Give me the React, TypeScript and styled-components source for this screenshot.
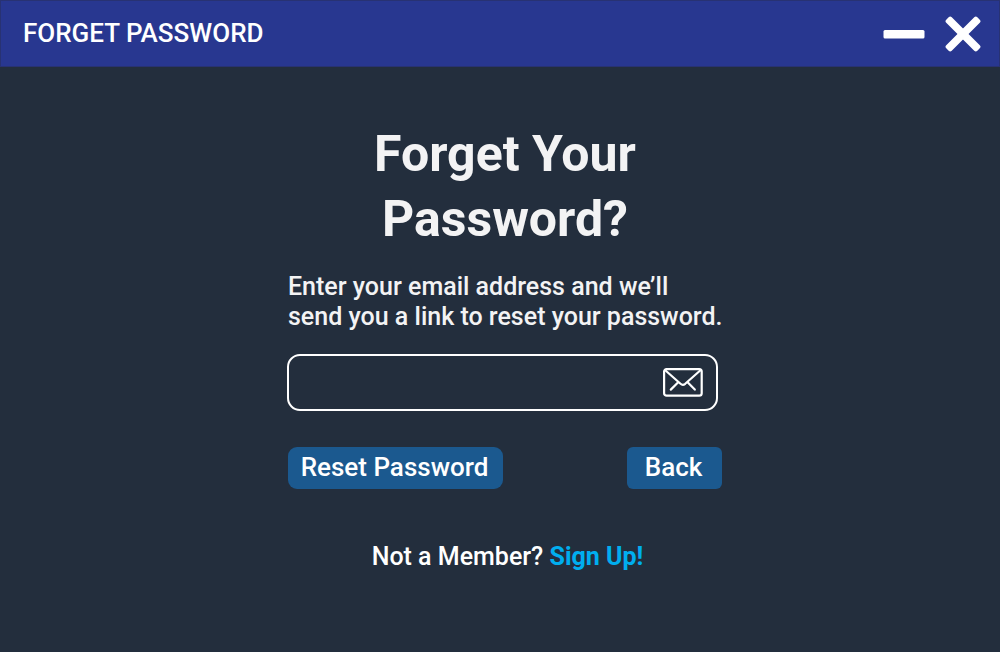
import React from "react";
import styled, { createGlobalStyle } from "styled-components";

const GlobalStyle = createGlobalStyle`
  * { box-sizing: border-box; }
  body { margin: 0; background: #232e3d; }
  body, button, input { font-family: Roboto, "Liberation Sans", sans-serif; font-weight: 500; }
`;

const Page = styled.div`
  min-height: 100vh;
  display: flex;
  flex-direction: column;
  color: #f3f3f4;
`;

const TitleBar = styled.header`
  display: flex;
  align-items: center;
  justify-content: space-between;
  height: 67px;
  padding: 0 18px 0 22px;
  background: #283790;
  border: 1px solid #283273;
`;

const BarTitle = styled.span`
  padding-bottom: 2px;
  color: #ffffff;
  font-size: 26px;
  line-height: 32px;
`;

const WindowControls = styled.div`
  display: flex;
  align-items: center;
  gap: 20px;
`;

const ControlButton = styled.button`
  display: flex;
  padding: 0;
  border: 0;
  background: none;
  color: #ffffff;
  cursor: pointer;
`;

const Main = styled.main`
  display: flex;
  flex-direction: column;
  align-items: center;
  padding: 55px 0 48px 10px;
`;

const Form = styled.form`
  display: flex;
  flex-direction: column;
  width: 434px;
`;

const Heading = styled.h1`
  margin: 0 0 20px;
  font-size: 50px;
  font-weight: 700;
  line-height: 65px;
  text-align: center;
`;

const Hint = styled.label`
  font-size: 25px;
  line-height: 30px;
  white-space: nowrap;
`;

const Field = styled.div`
  display: flex;
  align-items: center;
  height: 57px;
  margin: 22px 4px 36px -1px;
  padding-right: 13px;
  border: 2px solid #ffffff;
  border-radius: 13px;
`;

const EmailInput = styled.input`
  flex: 1;
  min-width: 0;
  height: 100%;
  padding: 0 16px;
  border: 0;
  outline: 0;
  background: transparent;
  color: #ffffff;
  font-size: 25px;
`;

const Actions = styled.div`
  display: flex;
  justify-content: space-between;
`;

const ActionButton = styled.button<{ $width: number; $radius: number }>`
  width: ${(p) => p.$width}px;
  height: 42px;
  padding: 0 2px 2px 0;
  border: 0;
  border-radius: ${(p) => p.$radius}px;
  background: #1b598f;
  color: #ffffff;
  font-size: 26px;
  line-height: 40px;
  cursor: pointer;
`;

const Footer = styled.p`
  margin: 53px 0 0;
  padding-left: 5px;
  color: #ffffff;
  font-size: 25px;
  line-height: 30px;
  text-align: center;
`;

const SignUpLink = styled.a`
  color: #00aeef;
  font-weight: 700;
  text-decoration: none;
`;

export default function App() {
  return (
    <Page>
      <GlobalStyle />
      <TitleBar>
        <BarTitle>FORGET PASSWORD</BarTitle>
        <WindowControls>
          <ControlButton type="button" aria-label="Minimize">
            <svg width="42" height="36" viewBox="0 0 42 36">
              <rect x="0.5" y="14" width="41" height="8.6" rx="1.5" fill="currentColor" />
            </svg>
          </ControlButton>
          <ControlButton type="button" aria-label="Close">
            <svg width="36" height="36" viewBox="0 0 36 36" fill="currentColor">
              <rect x="-4" y="14.1" width="44" height="7.8" rx="2.2" transform="rotate(45 18 18)" />
              <rect x="-4" y="14.1" width="44" height="7.8" rx="2.2" transform="rotate(-45 18 18)" />
            </svg>
          </ControlButton>
        </WindowControls>
      </TitleBar>
      <Main>
        <Form onSubmit={(e) => e.preventDefault()}>
          <Heading>
            Forget Your
            <br />
            Password?
          </Heading>
          <Hint htmlFor="email">
            Enter your email address and we’ll
            <br />
            send you a link to reset your password.
          </Hint>
          <Field>
            <EmailInput id="email" type="email" />
            <svg width="40" height="29" viewBox="0 0 40 29" fill="none" stroke="#ffffff" strokeWidth="2.2" strokeLinecap="round" strokeLinejoin="round" aria-hidden="true">
              <rect x="1.1" y="1.1" width="37.6" height="26.6" rx="2.5" />
              <path d="M2.5 2.5L17.5 15.8Q19.8 17.8 22.2 15.8L37.2 2.5M7.8 21.6L15.2 14.2M31.8 21.6L24.6 14.2" />
            </svg>
          </Field>
          <Actions>
            <ActionButton type="submit" $width={215} $radius={9}>Reset Password</ActionButton>
            <ActionButton type="button" $width={95} $radius={6}>Back</ActionButton>
          </Actions>
        </Form>
        <Footer>
          Not a Member? <SignUpLink href="#signup">Sign Up!</SignUpLink>
        </Footer>
      </Main>
    </Page>
  );
}
